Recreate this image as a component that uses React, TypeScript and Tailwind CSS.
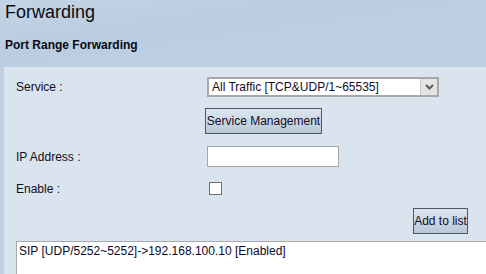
import React from "react";

export default function App() {
  const font = { fontFamily: '"Liberation Sans", Arial, sans-serif' };
  return (
    <div
      className="w-[486px] h-[274px] overflow-hidden bg-[#bdcfe1] text-black"
      style={font}
    >
      <div className="h-[67px] bg-[linear-gradient(172deg,#c3d4e4_0%,#bacde0_35%,#bed0e2_70%,#bccfe1_100%)] pl-[5px] pt-[1px]">
        <div className="text-[18px] leading-[22px] text-[#0a0a14]">Forwarding</div>
        <div className="mt-[15px] text-[12px] leading-[14px] font-bold text-[#0a0a14]">
          Port Range Forwarding
        </div>
      </div>
      <div className="ml-[4px] h-[207px] bg-[#d9e4ee] pl-[12px] pt-[10px] text-[12px] leading-[14px] text-[#140a1e]">
        {/* Service row */}
        <div className="flex items-center h-[20px]">
          <div className="w-[191px]">Service :</div>
          <div className="relative w-[232px] h-[20px] bg-white border-2 border-[#a8a8a8] flex items-center">
            <span className="pl-[3px] whitespace-nowrap">All Traffic [TCP&amp;UDP/1~65535]</span>
            <div className="absolute right-0 top-0 w-[17px] h-[16px] bg-[#e4e4e4] border-l border-[#c4c4c4] flex items-center justify-center">
              <svg width="9" height="6" viewBox="0 0 9 6">
                <path d="M1 1 L4.5 4.5 L8 1" fill="none" stroke="#5a5a5a" strokeWidth="2" />
              </svg>
            </div>
          </div>
        </div>
        {/* Service Management */}
        <div className="flex mt-[11px] h-[26px]">
          <div className="w-[189px]" />
          <button className="w-[117px] h-[26px] border border-[#4d5a66] bg-[linear-gradient(#dbe5ee,#cbd8e3_50%,#b7c8d7)] text-[12px] leading-[14px] text-[#140a28] px-0 whitespace-nowrap">
            Service Management
          </button>
        </div>
        {/* IP Address */}
        <div className="flex items-center mt-[12px] h-[21px]">
          <div className="w-[191px]">IP Address :</div>
          <div className="w-[132px] h-[21px] bg-white border border-[#a8a8a8]" />
        </div>
        {/* Enable */}
        <div className="flex items-center mt-[15px] h-[13px]">
          <div className="w-[193px]">Enable :</div>
          <div className="w-[13px] h-[13px] bg-white border border-[#6e6e6e]" />
        </div>
        {/* Add to list */}
        <div className="flex mt-[13px] h-[26px]">
          <div className="w-[397px]" />
          <button className="w-[55px] h-[26px] border border-[#4d5a66] bg-[linear-gradient(#dbe5ee,#cbd8e3_50%,#b7c8d7)] text-[12px] leading-[14px] text-[#140a28] px-0 whitespace-nowrap">
            Add to list
          </button>
        </div>
        {/* List */}
        <div className="mt-[7px] h-[40px] bg-white border-t border-l border-[#a9a9a9] pl-[2px] pt-[2px] whitespace-nowrap text-[#0a0a28]">
          SIP [UDP/5252~5252]-&gt;192.168.100.10 [Enabled]
        </div>
      </div>
    </div>
  );
}
